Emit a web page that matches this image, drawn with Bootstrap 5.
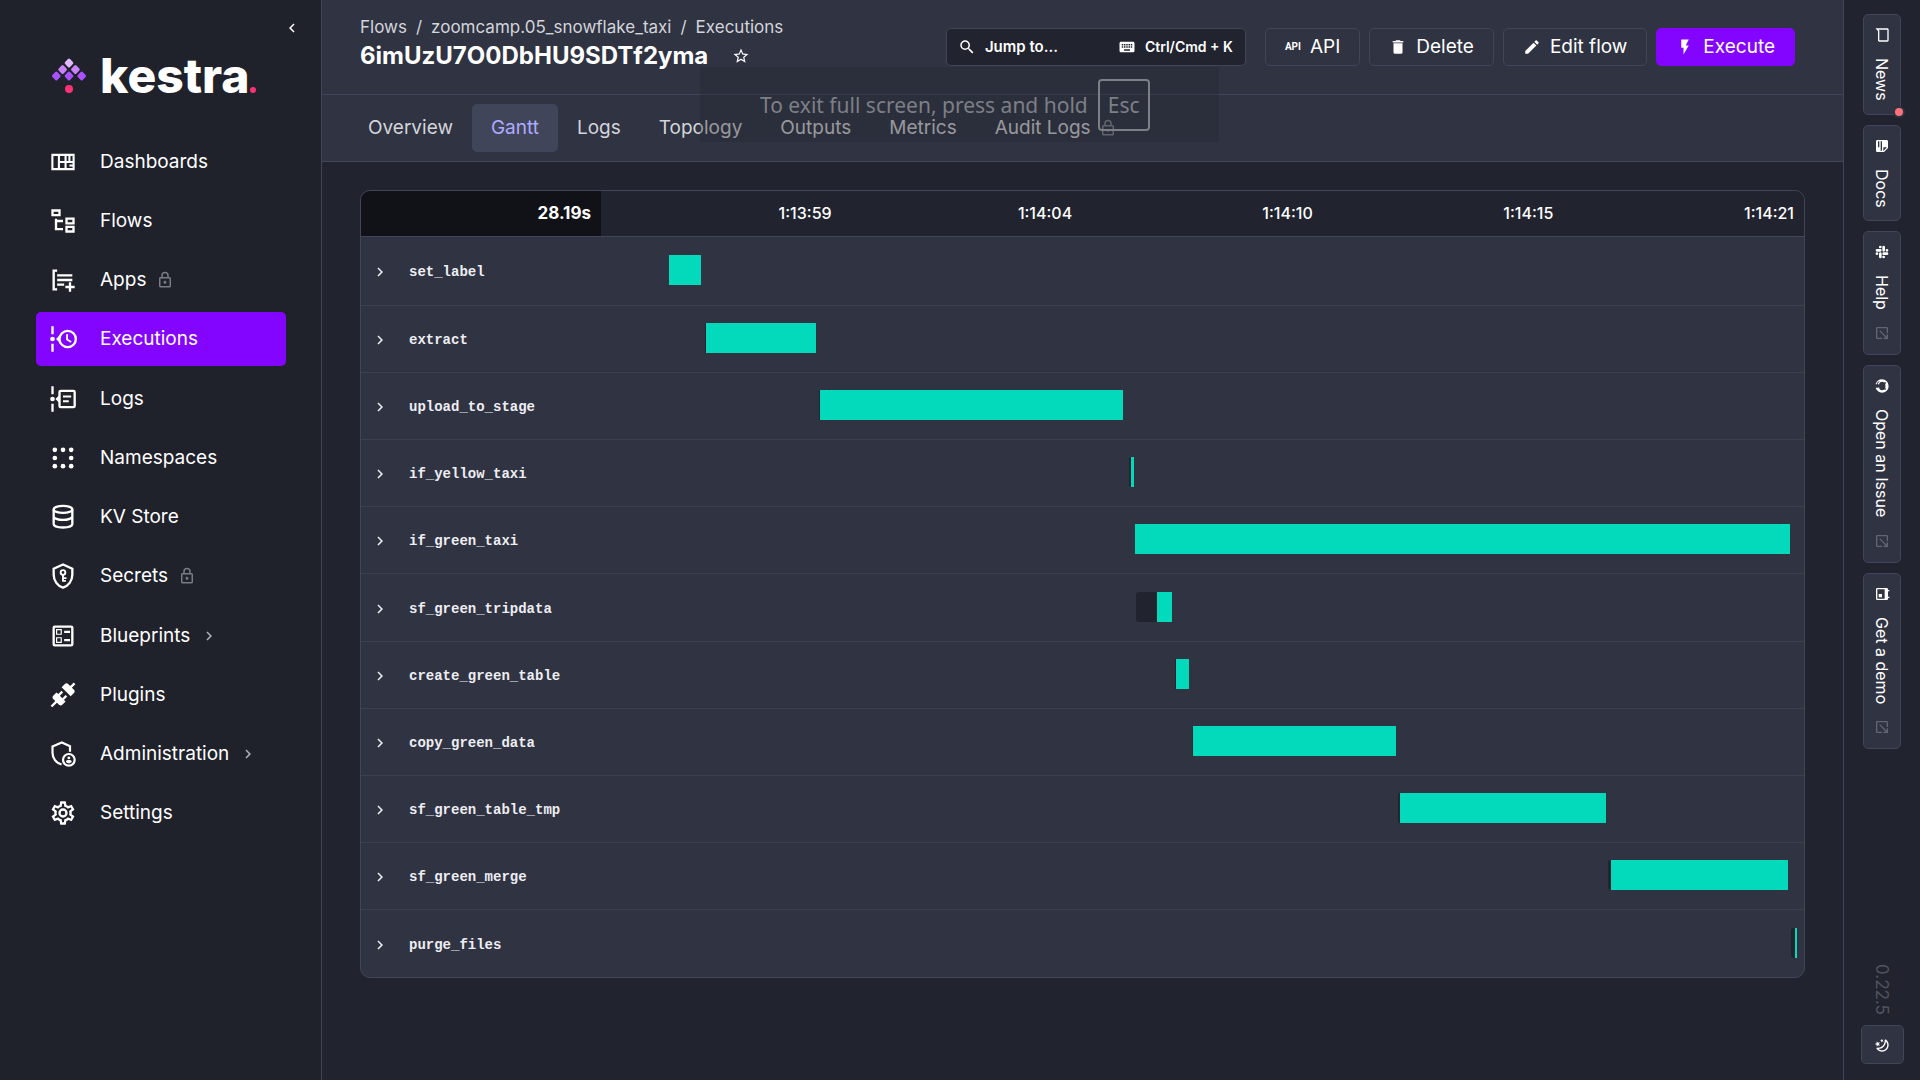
<!DOCTYPE html>
<html lang="en" data-bs-theme="dark">
<head>
<meta charset="utf-8">
<meta name="viewport" content="width=device-width, initial-scale=1">
<title>Execution Gantt | Kestra</title>
<link href="https://cdn.jsdelivr.net/npm/bootstrap@5.3.0/dist/css/bootstrap.min.css" rel="stylesheet">
<style>
:root { --k-line:#404559; --k-panel:#2f3342; --k-page:#21232e; --k-purple:#8405ff; }
body { font-family:Inter, "Liberation Sans", sans-serif; font-size:19px; line-height:24px; background:var(--k-page); color:#fff; }
svg { fill:currentColor; flex:none; }
a { color:inherit; text-decoration:none; }
.ico { width:18px; height:18px; }
.ico-sm { width:16px; height:16px; }
.turned { transform:rotate(90deg); }

.side { width:322px; background:#1f212b; border-right:1px solid var(--k-line); padding:52px 35px 0 36px; }
.collapse-btn { position:absolute; top:19px; right:20px; width:18px; height:18px; color:#fff; }
.brand { height:48px; margin:0 0 34px 14px; gap:12px; }
.brand-name { font-size:48px; line-height:48px; font-weight:800; }
.menu { min-height:706px; }
.menu a { height:54px; padding:1px 0 0 13px; border-radius:5px; color:#fff; }
.menu a svg.lead-ico { width:28px; height:28px; margin-right:23px; }
.menu a.on { background:var(--k-purple); }
.menu .after { color:#797b85; margin-left:10px; }
.menu .go { color:#b0b1b8; margin-left:10px; }

.top { height:95px; padding:14px 48px 0 38px; border-bottom:1px solid var(--k-line); background:var(--k-panel); }
.crumbs { font-size:17px; line-height:26px; color:#d4d5da; gap:9px; }
.exec-id { font-size:24px; line-height:32px; font-weight:700; margin:0; }
.actions { padding-top:14px; gap:9px; }
.k-btn { height:38px; padding:0 19px; border:1px solid var(--k-line); border-radius:5px; background:none; color:#fff; gap:9px; }
.k-btn.go-btn { background:var(--k-purple); border-color:var(--k-purple); }
.k-btn.jump { width:300px; background:var(--k-page); padding:0 12px 0 11px; font-size:15px; font-weight:600; margin-right:10px; }
.jump .keys-hint { font-size:14px; }
.api-mark { font:700 10px/18px Roboto, sans-serif; }

.tabs { height:67px; padding:9px 27px; background:var(--k-panel); border-bottom:1px solid var(--k-line); }
.tabs a { height:48px; padding:0 19px; border-radius:5px; color:#d4d5da; }
.tabs a.on { background:var(--k-line); color:#aeabff; }

.canvas { padding:28px 38px; }
.gantt { border:1px solid var(--k-line); border-radius:10px; background:var(--k-panel); overflow:hidden; }
.gantt table { width:100%; table-layout:fixed; border-collapse:separate; border-spacing:0; font-size:16px; }
.gantt thead th { height:46px; padding:0 10px 2px; text-align:right; font-weight:500; background:var(--k-page); border-bottom:1px solid var(--k-line); }
.gantt thead th.total { width:240px; background:#111217; font-size:17px; font-weight:700; }
.gantt tbody tr { height:67px; }
.gantt tbody tr:first-child { height:69px; }
.gantt tbody tr:nth-child(6) { height:68px; }
.gantt tbody th, .gantt tbody td { border-bottom:1px solid #3b3f50; padding:0; vertical-align:middle; }
.gantt tbody tr:last-child > * { border-bottom:0; }
.task { background:none; border:0; color:#eeeef2; padding:2px 0 0 10px; gap:20px; font:600 14px/20px "Liberation Mono", monospace; }
.track { height:30px; margin-bottom:2px; }
.wait { background:#21232e; border-radius:3px 0 0 3px; }
.run { background:#03dabb; }

.rail { width:77px; padding:14px 0 16px; border-left:1px solid var(--k-line); background:var(--k-page); gap:10px; }
.rail-btn { width:38px; writing-mode:vertical-rl; padding:12px 0 13px; background:var(--k-panel); border:1px solid var(--k-line); border-radius:5px; gap:15px; font-size:16px; line-height:20px; color:#fff; }
.rail-btn .out { color:#626573; }
.dot { position:absolute; right:-5px; bottom:-4px; width:12px; height:12px; border-radius:50%; background:#fd7278; border:2px solid var(--k-panel); }
.ver { writing-mode:vertical-rl; color:#51545f; font-size:17px; line-height:20px; }
.theme { width:43px; height:39px; background:var(--k-panel); border:1px solid var(--k-line); border-radius:5px; color:#fff; }
.theme svg { transform:rotate(-90deg); }

.fs-note { position:absolute; top:67px; left:378px; width:519px; height:75px; background:rgba(38,40,46,.35); color:#7d7f87; font:21px/32px "Noto Sans", sans-serif; padding:0 0 0 60px; gap:10px; pointer-events:none; }
.fs-note kbd { font:inherit; color:inherit; background:none; border:2px solid #7d7f87; border-radius:4px; padding:8px; }
</style>
</head>
<body>
<svg class="d-none" aria-hidden="true">
  <symbol id="left" viewBox="0 0 24 24"><path d="M15.41,16.58L10.83,12L15.41,7.41L14,6L8,12L14,18Z"/></symbol>
  <symbol id="right" viewBox="0 0 24 24"><path d="M8.59,16.58L13.17,12L8.59,7.41L10,6L16,12L10,18Z"/></symbol>
  <symbol id="dash" viewBox="0 0 24 24"><path fill="none" stroke="currentColor" stroke-width="1.8" d="M2.9,5.9H21.1V18.1H2.9ZM8.5,6V18M14.2,6V18M8.5,12H14.2M14.2,12H21M17.5,6V12M17.5,15H21" /></symbol>
  <symbol id="tree" viewBox="0 0 24 24"><path d="M12,13H7V18H12V20H5V10H7V11H12V13M8,4V6H4V4H8M10,2H2V8H10V2M20,11V13H16V11H20M22,9H14V15H22V9M20,18V20H16V18H20M22,16H14V22H22V16Z"/></symbol>
  <symbol id="apps" viewBox="0 0 24 24"><path d="M3,3H7V5H5V19H7V21H3ZM7,7H20V9H7ZM7,11H20V13H7ZM7,15H13V17H7ZM17,14H19V17H22V19H19V22H17V19H14V17H17Z"/></symbol>
  <symbol id="exec" viewBox="0 0 24 24"><path d="M2,1H4V8H2ZM2,16H4V23H2ZM3,10A2,2 0 0,1 5,12A2,2 0 0,1 3,14A2,2 0 0,1 3,10ZM6,12L9,9V15Z"/><circle cx="16" cy="12" r="7" fill="none" stroke="currentColor" stroke-width="2"/><path fill="none" stroke="currentColor" stroke-width="1.6" d="M15.5,8V12.5L19,14.6"/></symbol>
  <symbol id="logs" viewBox="0 0 24 24"><path d="M2,1H4V8H2ZM2,16H4V23H2ZM3,10A2,2 0 0,1 3,14A2,2 0 0,1 3,10ZM5.500,12L8.500,9V15ZM12,9H19V10.800H12ZM12,13H17V14.800H12Z"/><rect x="9" y="5" width="13" height="14" rx="1" fill="none" stroke="currentColor" stroke-width="2"/></symbol>
  <symbol id="dots" viewBox="0 0 24 24"><circle cx="5" cy="5" r="2"/><circle cx="12" cy="5" r="2"/><circle cx="19" cy="5" r="2"/><circle cx="5" cy="12" r="2"/><circle cx="19" cy="12" r="2"/><circle cx="5" cy="19" r="2"/><circle cx="12" cy="19" r="2"/><circle cx="19" cy="19" r="2"/></symbol>
  <symbol id="db" viewBox="0 0 24 24"><g fill="none" stroke="currentColor" stroke-width="2"><ellipse cx="12" cy="5.500" rx="8" ry="3"/><path d="M4,5.500V18C4,19.800 7.600,21 12,21S20,19.800 20,18V5.500M4,11.500C4,13 7.600,14.500 12,14.500S20,13 20,11.500" /></g></symbol>
  <symbol id="shieldkey" viewBox="0 0 24 24"><path fill="none" stroke="currentColor" stroke-width="2" d="M12,2.100L4,5.700V11C4,16 7.400,20.600 12,22C16.600,20.600 20,16 20,11V5.700Z"/><circle cx="12" cy="9" r="2" fill="none" stroke="currentColor" stroke-width="1.600"/><path d="M11.200,11H12.800V13H15V14.500H12.800V15.500H14.500V17H11.200Z"/></symbol>
  <symbol id="ballot" viewBox="0 0 24 24"><path d="M13,7.500H18V9.500H13V7.500M13,14.500H18V16.500H13V14.500M19,3A2,2 0 0,1 21,5V19A2,2 0 0,1 19,21H5A2,2 0 0,1 3,19V5A2,2 0 0,1 5,3H19M19,19V5H5V19H19M11,6V11H6V6H11M10,10V7H7V10H10M11,13V18H6V13H11M10,17V14H7V17H10Z"/></symbol>
  <symbol id="plug" viewBox="0 0 24 24"><path d="M21.4 7.5C22.2 8.3 22.2 9.6 21.4 10.3L18.6 13.1L10.8 5.3L13.6 2.5C14.4 1.7 15.7 1.7 16.4 2.5L18.2 4.3L21.2 1.3L22.6 2.7L19.6 5.7L21.4 7.5M15.6 13.3L14.2 11.9L11.4 14.7L9.3 12.6L12.1 9.8L10.7 8.4L7.9 11.2L6.4 9.8L3.6 12.6C2.8 13.4 2.8 14.7 3.6 15.4L5.4 17.2L1.4 21.2L2.8 22.6L6.8 18.6L8.6 20.4C9.4 21.2 10.7 21.2 11.4 20.4L14.2 17.6L12.8 16.2L15.6 13.3Z"/></symbol>
  <symbol id="admin" viewBox="0 0 24 24"><path fill="none" stroke="currentColor" stroke-width="1.900" d="M18,10V5.300L11,2.100L3,5.600V11C3,15.500 6,19.800 10.800,21"/><circle cx="17" cy="17" r="5" fill="none" stroke="currentColor" stroke-width="1.900"/><circle cx="17" cy="15.400" r="1.200"/><path d="M14.500,18.600C14.500,17.500 16,17.200 17,17.200S19.500,17.500 19.500,18.600C19,19.400 18,19.900 17,19.900S15,19.400 14.500,18.600Z"/></symbol>
  <symbol id="cog" viewBox="0 0 24 24"><path d="M12,8A4,4 0 0,1 16,12A4,4 0 0,1 12,16A4,4 0 0,1 8,12A4,4 0 0,1 12,8M12,10A2,2 0 0,0 10,12A2,2 0 0,0 12,14A2,2 0 0,0 14,12A2,2 0 0,0 12,10M10,22C9.75,22 9.54,21.82 9.5,21.58L9.13,18.93C8.5,18.68 7.96,18.34 7.44,17.94L4.95,18.95C4.73,19.03 4.46,18.95 4.34,18.73L2.34,15.27C2.21,15.05 2.27,14.78 2.46,14.63L4.57,12.97L4.5,12L4.57,11L2.46,9.37C2.27,9.22 2.21,8.95 2.34,8.73L4.34,5.27C4.46,5.05 4.73,4.96 4.95,5.05L7.44,6.05C7.96,5.66 8.5,5.32 9.13,5.07L9.5,2.42C9.54,2.18 9.75,2 10,2H14C14.25,2 14.46,2.18 14.5,2.42L14.87,5.07C15.5,5.32 16.04,5.66 16.56,6.05L19.05,5.05C19.27,4.96 19.54,5.05 19.66,5.27L21.66,8.73C21.79,8.95 21.73,9.22 21.54,9.37L19.43,11L19.5,12L19.43,13L21.54,14.63C21.73,14.78 21.79,15.05 21.66,15.27L19.66,18.73C19.54,18.95 19.27,19.04 19.05,18.95L16.56,17.95C16.04,18.34 15.5,18.68 14.87,18.93L14.5,21.58C14.46,21.82 14.25,22 14,22H10M11.25,4L10.88,6.61C9.68,6.86 8.62,7.5 7.85,8.39L5.44,7.35L4.69,8.65L6.8,10.2C6.4,11.37 6.4,12.64 6.8,13.8L4.68,15.36L5.43,16.66L7.86,15.62C8.63,16.5 9.68,17.14 10.87,17.38L11.24,20H12.76L13.13,17.39C14.32,17.14 15.37,16.5 16.14,15.62L18.57,16.66L19.32,15.36L17.2,13.81C17.6,12.64 17.6,11.37 17.2,10.2L19.31,8.65L18.56,7.35L16.15,8.39C15.38,7.5 14.32,6.86 13.12,6.62L12.75,4H11.25Z"/></symbol>
  <symbol id="lock" viewBox="0 0 24 24"><path d="M12,17C10.89,17 10,16.1 10,15C10,13.89 10.89,13 12,13A2,2 0 0,1 14,15A2,2 0 0,1 12,17M18,20V10H6V20H18M18,8A2,2 0 0,1 20,10V20A2,2 0 0,1 18,22H6C4.89,22 4,21.1 4,20V10C4,8.89 4.89,8 6,8H7V6A5,5 0 0,1 12,1A5,5 0 0,1 17,6V8H18M12,3A3,3 0 0,0 9,6V8H15V6A3,3 0 0,0 12,3Z"/></symbol>
  <symbol id="find" viewBox="0 0 24 24"><path d="M9.5,3A6.5,6.5 0 0,1 16,9.5C16,11.11 15.41,12.59 14.44,13.73L14.71,14H15.5L20.5,19L19,20.5L14,15.5V14.71L13.73,14.44C12.59,15.41 11.11,16 9.5,16A6.5,6.5 0 0,1 3,9.5A6.5,6.5 0 0,1 9.5,3M9.5,5C7,5 5,7 5,9.5C5,12 7,14 9.5,14C12,14 14,12 14,9.5C14,7 12,5 9.5,5Z"/></symbol>
  <symbol id="keys" viewBox="0 0 24 24"><path d="M19,10H17V8H19M19,13H17V11H19M16,10H14V8H16M16,13H14V11H16M16,17H8V15H16M7,10H5V8H7M7,13H5V11H7M8,11H10V13H8M8,8H10V10H8M11,11H13V13H11M11,8H13V10H11M20,5H4C2.89,5 2,5.89 2,7V17A2,2 0 0,0 4,19H20A2,2 0 0,0 22,17V7C22,5.89 21.1,5 20,5Z"/></symbol>
  <symbol id="bin" viewBox="0 0 24 24"><path d="M19,4H15.500L14.500,3H9.500L8.500,4H5V6H19M6,19A2,2 0 0,0 8,21H16A2,2 0 0,0 18,19V7H6V19Z"/></symbol>
  <symbol id="pencil" viewBox="0 0 24 24"><path d="M20.71,7.04C21.1,6.65 21.1,6 20.71,5.63L18.37,3.29C18,2.9 17.35,2.9 16.96,3.29L15.12,5.12L18.87,8.87M3,17.25V21H6.75L17.81,9.93L14.06,6.18L3,17.25Z"/></symbol>
  <symbol id="flash" viewBox="0 0 24 24"><path d="M7,2V13H10V22L17,10H13L17,2H7Z"/></symbol>
  <symbol id="star" viewBox="0 0 24 24"><path d="M12,15.39L8.24,17.66L9.23,13.38L5.91,10.5L10.29,10.13L12,6.09L13.71,10.13L18.09,10.5L14.77,13.38L15.76,17.66M22,9.24L14.81,8.63L12,2L9.19,8.63L2,9.24L7.45,13.97L5.82,21L12,17.27L18.18,21L16.54,13.97L22,9.24Z"/></symbol>
  <symbol id="msg" viewBox="0 0 24 24"><path d="M20 2H4C2.9 2 2 2.9 2 4V22L6 18H20C21.1 18 22 17.1 22 16V4C22 2.9 21.1 2 20 2M20 16H5.2L4 17.2V4H20V16Z"/></symbol>
  <symbol id="note" viewBox="0 0 24 24"><path d="M14,10H19.5L14,4.5V10M5,3H15L21,9V19A2,2 0 0,1 19,21H5C3.89,21 3,20.1 3,19V5C3,3.89 3.89,3 5,3M5,12V14H19V12H5M5,16V18H14V16H5Z"/></symbol>
  <symbol id="slack" viewBox="0 0 24 24"><path fill="none" stroke="currentColor" stroke-width="4" stroke-linecap="round" d="M9.500,9.500H4.500M14.500,9.500V4.500M14.500,14.500H19.500M9.500,14.500V19.500M9.500,4.500V4.600M19.500,9.500V9.600M14.500,19.500V19.600M4.500,14.500V14.600"/></symbol>
  <symbol id="git" viewBox="0 0 24 24"><path d="M12,2A10,10 0 0,0 2,12C2,16.42 4.87,20.17 8.84,21.5C9.34,21.58 9.5,21.27 9.5,21C9.5,20.77 9.5,20.14 9.5,19.31C6.73,19.91 6.14,17.97 6.14,17.97C5.68,16.81 5.03,16.5 5.03,16.5C4.12,15.88 5.1,15.9 5.1,15.9C6.1,15.97 6.63,16.93 6.63,16.93C7.5,18.45 8.97,18 9.54,17.76C9.63,17.11 9.89,16.67 10.17,16.42C7.95,16.17 5.62,15.31 5.62,11.5C5.62,10.39 6,9.5 6.65,8.79C6.55,8.54 6.2,7.5 6.75,6.15C6.75,6.15 7.59,5.88 9.5,7.17C10.29,6.95 11.15,6.84 12,6.84C12.85,6.84 13.71,6.95 14.5,7.17C16.41,5.88 17.25,6.15 17.25,6.15C17.8,7.5 17.45,8.54 17.35,8.79C18,9.5 18.38,10.39 18.38,11.5C18.38,15.32 16.04,16.16 13.81,16.41C14.17,16.72 14.5,17.33 14.5,18.26C14.5,19.6 14.5,20.68 14.5,21C14.5,21.27 14.66,21.59 15.17,21.5C19.14,20.16 22,16.42 22,12A10,10 0 0,0 12,2Z"/></symbol>
  <symbol id="cal" viewBox="0 0 24 24"><path d="M19,19H5V8H19M16,1V3H8V1H6V3H5C3.89,3 3,3.89 3,5V19A2,2 0 0,0 5,21H19A2,2 0 0,0 21,19V5C21,3.89 20.1,3 19,3H18V1M17,12H12V17H17V12Z"/></symbol>
  <symbol id="out" viewBox="0 0 24 24"><path d="M14,3V5H17.59L7.76,14.83L9.17,16.24L19,6.41V10H21V3M19,19H5V5H12V3H5C3.89,3 3,3.9 3,5V19A2,2 0 0,0 5,21H19A2,2 0 0,0 21,19V12H19V19Z"/></symbol>
  <symbol id="night" viewBox="0 0 24 24"><path d="M17.75,4.09L15.22,6.03L16.13,9.09L13.5,7.28L10.87,9.09L11.78,6.03L9.25,4.09L12.44,4L13.5,1L14.56,4L17.75,4.09M21.25,11L19.61,12.25L20.2,14.23L18.5,13.06L16.8,14.23L17.39,12.25L15.75,11L17.81,10.95L18.5,9L19.19,10.95L21.25,11M18.97,15.95C19.8,15.87 20.69,17.05 20.16,17.8C19.84,18.25 19.5,18.67 19.08,19.07C15.17,23 8.84,23 4.94,19.07C1.03,15.17 1.03,8.83 4.94,4.93C5.34,4.53 5.76,4.17 6.21,3.85C6.96,3.32 8.14,4.21 8.06,5.04C7.79,7.9 8.75,10.87 10.95,13.06C13.14,15.26 16.1,16.22 18.97,15.95M17.33,17.97C14.5,17.81 11.7,16.64 9.53,14.5C7.36,12.31 6.2,9.5 6.04,6.68C3.23,9.82 3.34,14.64 6.35,17.66C9.37,20.67 14.19,20.78 17.33,17.97Z"/></symbol>
</svg>

<div class="d-flex min-vh-100">
  <aside class="side position-relative flex-shrink-0">
    <button class="collapse-btn btn p-0 border-0 d-flex" aria-label="Collapse menu"><svg class="ico"><use href="#left"/></svg></button>
    <a href="#" class="brand d-flex align-items-center">
      <svg width="38" height="38" viewBox="0 0 38 38" aria-hidden="true">
        <g><rect x="-3.500" y="-3.500" width="7" height="7" rx="1.500" fill="#e3b8ff" transform="translate(19 6) rotate(45)"/>
        <rect x="-3.500" y="-3.500" width="7" height="7" rx="1.500" fill="#cb82ff" transform="translate(12.600 12.500) rotate(45)"/>
        <rect x="-3.500" y="-3.500" width="7" height="7" rx="1.500" fill="#cb82ff" transform="translate(25.400 12.500) rotate(45)"/>
        <rect x="-3.500" y="-3.500" width="7" height="7" rx="1.500" fill="#a950ff" transform="translate(6.300 19) rotate(45)"/>
        <rect x="-3.500" y="-3.500" width="7" height="7" rx="1.500" fill="#a950ff" transform="translate(19 19) rotate(45)"/>
        <rect x="-3.500" y="-3.500" width="7" height="7" rx="1.500" fill="#a950ff" transform="translate(31.700 19) rotate(45)"/></g>
        <circle cx="19" cy="32" r="4" fill="#fd3275"/>
      </svg>
      <span class="d-flex align-items-baseline"><span class="brand-name">kestra</span><svg width="6" height="6" viewBox="0 0 6 6"><circle cx="3" cy="3" r="3" fill="#fd3275"/></svg></span>
    </a>
    <nav class="menu d-flex flex-column justify-content-between">
      <a href="#" class="d-flex align-items-center"><svg class="lead-ico"><use href="#dash"/></svg>Dashboards</a>
      <a href="#" class="d-flex align-items-center"><svg class="lead-ico"><use href="#tree"/></svg>Flows</a>
      <a href="#" class="d-flex align-items-center"><svg class="lead-ico"><use href="#apps"/></svg>Apps<svg class="ico after"><use href="#lock"/></svg></a>
      <a href="#" class="d-flex align-items-center on" aria-current="page"><svg class="lead-ico"><use href="#exec"/></svg>Executions</a>
      <a href="#" class="d-flex align-items-center"><svg class="lead-ico"><use href="#logs"/></svg>Logs</a>
      <a href="#" class="d-flex align-items-center"><svg class="lead-ico"><use href="#dots"/></svg>Namespaces</a>
      <a href="#" class="d-flex align-items-center"><svg class="lead-ico"><use href="#db"/></svg>KV Store</a>
      <a href="#" class="d-flex align-items-center"><svg class="lead-ico"><use href="#shieldkey"/></svg>Secrets<svg class="ico after"><use href="#lock"/></svg></a>
      <a href="#" class="d-flex align-items-center"><svg class="lead-ico"><use href="#ballot"/></svg>Blueprints<svg class="ico go"><use href="#right"/></svg></a>
      <a href="#" class="d-flex align-items-center"><svg class="lead-ico"><use href="#plug"/></svg>Plugins</a>
      <a href="#" class="d-flex align-items-center"><svg class="lead-ico"><use href="#admin"/></svg>Administration<svg class="ico go"><use href="#right"/></svg></a>
      <a href="#" class="d-flex align-items-center"><svg class="lead-ico"><use href="#cog"/></svg>Settings</a>
    </nav>
  </aside>

  <main class="flex-grow-1 position-relative">
    <header class="top d-flex justify-content-between align-items-start">
      <div>
        <nav class="crumbs d-flex" aria-label="Breadcrumb"><a href="#">Flows</a><span>/</span><a href="#">zoomcamp.05_snowflake_taxi</a><span>/</span><a href="#">Executions</a></nav>
        <div class="d-flex align-items-center"><h1 class="exec-id">6imUzU7O0DbHU9SDTf2yma</h1><button class="btn p-0 border-0 d-flex ms-4 text-white" aria-label="Bookmark"><svg class="ico"><use href="#star"/></svg></button></div>
      </div>
      <div class="actions d-flex">
        <button class="k-btn jump d-flex align-items-center"><svg class="ico"><use href="#find"/></svg><span>Jump to...</span><svg class="ico ms-auto"><use href="#keys"/></svg><span class="keys-hint">Ctrl/Cmd + K</span></button>
        <button class="k-btn d-flex align-items-center"><span class="api-mark" aria-hidden="true">API</span>API</button>
        <button class="k-btn d-flex align-items-center"><svg class="ico"><use href="#bin"/></svg>Delete</button>
        <button class="k-btn d-flex align-items-center"><svg class="ico"><use href="#pencil"/></svg>Edit flow</button>
        <button class="k-btn go-btn d-flex align-items-center"><svg class="ico"><use href="#flash"/></svg>Execute</button>
      </div>
    </header>
    <nav class="tabs d-flex" aria-label="Execution tabs">
      <a href="#" class="d-flex align-items-center">Overview</a>
      <a href="#" class="d-flex align-items-center on" aria-current="page">Gantt</a>
      <a href="#" class="d-flex align-items-center">Logs</a>
      <a href="#" class="d-flex align-items-center">Topology</a>
      <a href="#" class="d-flex align-items-center">Outputs</a>
      <a href="#" class="d-flex align-items-center">Metrics</a>
      <a href="#" class="d-flex align-items-center">Audit Logs<svg class="ico ms-2 opacity-50"><use href="#lock"/></svg></a>
    </nav>
    <section class="canvas">
      <div class="gantt">
        <table>
          <thead><tr><th class="total" scope="col">28.19s</th><th scope="col">1:13:59</th><th scope="col">1:14:04</th><th scope="col">1:14:10</th><th scope="col">1:14:15</th><th scope="col">1:14:21</th></tr></thead>
          <tbody>
            <tr><th scope="row"><button class="task d-flex align-items-center"><svg class="ico"><use href="#right"/></svg>set_label</button></th><td colspan="5"><div class="track d-flex"><div class="run" style="margin-left:5.65%;width:2.66%"></div></div></td></tr>
            <tr><th scope="row"><button class="task d-flex align-items-center"><svg class="ico"><use href="#right"/></svg>extract</button></th><td colspan="5"><div class="track d-flex"><div class="wait" style="margin-left:8.65%;width:.08%"></div><div class="run" style="width:9.16%"></div></div></td></tr>
            <tr><th scope="row"><button class="task d-flex align-items-center"><svg class="ico"><use href="#right"/></svg>upload_to_stage</button></th><td colspan="5"><div class="track d-flex"><div class="wait" style="margin-left:18.12%;width:.08%"></div><div class="run" style="width:25.19%"></div></div></td></tr>
            <tr><th scope="row"><button class="task d-flex align-items-center"><svg class="ico"><use href="#right"/></svg>if_yellow_taxi</button></th><td colspan="5"><div class="track d-flex"><div class="wait" style="margin-left:43.89%;width:.17%"></div><div class="run" style="width:.25%"></div></div></td></tr>
            <tr><th scope="row"><button class="task d-flex align-items-center"><svg class="ico"><use href="#right"/></svg>if_green_taxi</button></th><td colspan="5"><div class="track d-flex"><div class="run" style="margin-left:44.39%;width:54.45%"></div></div></td></tr>
            <tr><th scope="row"><button class="task d-flex align-items-center"><svg class="ico"><use href="#right"/></svg>sf_green_tripdata</button></th><td colspan="5"><div class="track d-flex"><div class="wait" style="margin-left:44.47%;width:1.75%"></div><div class="run" style="width:1.25%"></div></div></td></tr>
            <tr><th scope="row"><button class="task d-flex align-items-center"><svg class="ico"><use href="#right"/></svg>create_green_table</button></th><td colspan="5"><div class="track d-flex"><div class="wait" style="margin-left:47.71%;width:.08%"></div><div class="run" style="width:1.08%"></div></div></td></tr>
            <tr><th scope="row"><button class="task d-flex align-items-center"><svg class="ico"><use href="#right"/></svg>copy_green_data</button></th><td colspan="5"><div class="track d-flex"><div class="wait" style="margin-left:49.13%;width:.08%"></div><div class="run" style="width:16.87%"></div></div></td></tr>
            <tr><th scope="row"><button class="task d-flex align-items-center"><svg class="ico"><use href="#right"/></svg>sf_green_table_tmp</button></th><td colspan="5"><div class="track d-flex"><div class="wait" style="margin-left:66.29%;width:.13%"></div><div class="run" style="width:17.12%"></div></div></td></tr>
            <tr><th scope="row"><button class="task d-flex align-items-center"><svg class="ico"><use href="#right"/></svg>sf_green_merge</button></th><td colspan="5"><div class="track d-flex"><div class="wait" style="margin-left:83.71%;width:.25%"></div><div class="run" style="width:14.71%"></div></div></td></tr>
            <tr><th scope="row"><button class="task d-flex align-items-center"><svg class="ico"><use href="#right"/></svg>purge_files</button></th><td colspan="5"><div class="track d-flex"><div class="wait" style="margin-left:98.92%;width:.33%"></div><div class="run" style="width:.17%"></div></div></td></tr>
          </tbody>
        </table>
      </div>
    </section>
    <div class="fs-note d-flex align-items-center"><span>To exit full screen, press and hold</span><kbd>Esc</kbd></div>
  </main>

  <aside class="rail d-flex flex-column align-items-center flex-shrink-0">
    <button class="rail-btn position-relative d-flex align-items-center"><svg class="ico-sm turned"><use href="#msg"/></svg>News<span class="dot"></span></button>
    <button class="rail-btn d-flex align-items-center"><svg class="ico-sm turned"><use href="#note"/></svg>Docs</button>
    <a href="#" class="rail-btn d-flex align-items-center"><svg class="ico-sm turned"><use href="#slack"/></svg>Help<svg class="ico-sm turned out"><use href="#out"/></svg></a>
    <a href="#" class="rail-btn d-flex align-items-center"><svg class="ico-sm turned"><use href="#git"/></svg>Open an Issue<svg class="ico-sm turned out"><use href="#out"/></svg></a>
    <a href="#" class="rail-btn d-flex align-items-center"><svg class="ico-sm turned"><use href="#cal"/></svg>Get a demo<svg class="ico-sm turned out"><use href="#out"/></svg></a>
    <span class="ver mt-auto">0.22.5</span>
    <button class="theme d-flex align-items-center justify-content-center" aria-label="Switch theme"><svg class="ico-sm"><use href="#night"/></svg></button>
  </aside>
</div>
<script src="https://cdn.jsdelivr.net/npm/bootstrap@5.3.0/dist/js/bootstrap.bundle.min.js"></script>
</body>
</html>
